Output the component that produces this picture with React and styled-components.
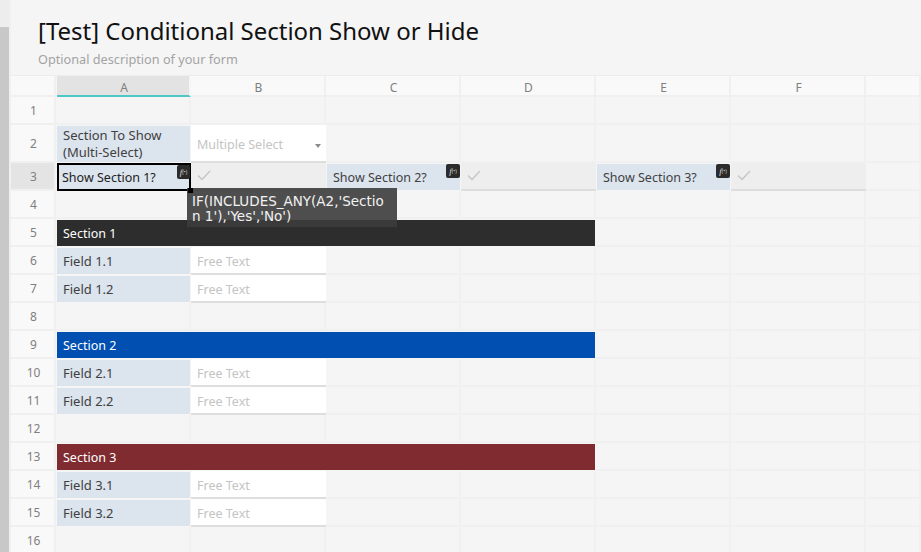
import React from 'react';
import styled, { createGlobalStyle } from 'styled-components';

const GlobalStyle = createGlobalStyle`
  html, body {
    margin: 0;
    height: 100%;
    overflow: hidden;
    background: #f5f5f5;
    font-family: "Noto Sans", "Open Sans", sans-serif;
  }
`;

const Page = styled.div`
  display: flex;
  width: 921px;
  height: 552px;
  overflow: hidden;
`;

const SideStrip = styled.div`
  width: 9px;
  flex: none;
  display: flex;
  flex-direction: column;
  background: #c8c8c8;
  border-right: 2px solid #f0f0f0;

  &::before {
    content: '';
    height: 27px;
    background: #ededed;
  }
`;

const Main = styled.div`
  flex: 1;
  min-width: 0;
`;

const FormHeader = styled.div`
  height: 76px;
  box-sizing: border-box;
  padding: 14px 0 0 27px;
  border-bottom: 1px solid #ececec;
`;

const Title = styled.h1`
  margin: 0;
  font-size: 24px;
  line-height: 33px;
  font-weight: 400;
  letter-spacing: -0.02px;
  color: #111;
`;

const Description = styled.p`
  margin: 4px 0 0;
  font-size: 12.7px;
  line-height: 17px;
  color: #a3a3a3;
`;

const Sheet = styled.div`
  display: grid;
  grid-template-columns: 45px repeat(6, 135px) 55px;
  grid-template-rows: 21px 28px 38px repeat(14, 28px);
`;

const ColHead = styled.div`
  box-sizing: border-box;
  display: flex;
  align-items: center;
  justify-content: center;
  padding: 4px 0 0 2px;
  font-size: 12px;
  color: #808080;
  background: ${(p) => (p.$active ? '#e3e3e3' : '#f9f9f9')};
  margin-left: ${(p) => (p.$active ? '1px' : '0')};
  border-right: 2px solid ${(p) => (p.$active ? '#f5f5f5' : '#f0f0f0')};
  border-bottom: 2px solid ${(p) => (p.$active ? '#4ec7c7' : '#f0f0f0')};
`;

const RowHead = styled.div`
  box-sizing: border-box;
  display: flex;
  align-items: center;
  justify-content: center;
  padding-left: 2px;
  font-size: 12px;
  color: #808080;
  background: ${(p) => (p.$active ? '#e4e4e4' : '#f9f9f9')};
  border-bottom: 2px solid #f0f0f0;
  border-right: 2px solid #f0f0f0;
`;

const Cell = styled.div`
  box-sizing: border-box;
  background: #f5f5f5;
  border-right: 2px solid #f0f0f0;
  border-bottom: 2px solid #f0f0f0;
`;

const Label = styled.div`
  position: relative;
  box-sizing: border-box;
  display: flex;
  align-items: center;
  margin: 1px;
  padding: 0 6px;
  font-size: 13px;
  line-height: 17px;
  color: #404040;
  background: #dce4ee;
`;

const FormulaLabel = styled(Label)`
  font-size: 12.5px;
`;

const FormulaBadge = styled.span`
  position: absolute;
  top: 0;
  right: 0;
  width: 14px;
  height: 14px;
  display: flex;
  align-items: center;
  justify-content: center;
  border-radius: 2px;
  font-size: 5px;
  line-height: 1;
  color: #ddd;
  background: #2b2b2b;

  b {
    font-size: 9px;
    font-weight: 400;
    font-family: "Liberation Serif", serif;
    font-style: italic;
  }
`;

const Selected = styled(FormulaLabel)`
  margin: 0 0 0 1px;
  padding: 0 3px;
  color: #222;
  border: 2px solid #000;
  z-index: 2;

  ${FormulaBadge} {
    right: -1px;
    width: 13px;
  }
`;

const Input = styled.div`
  box-sizing: border-box;
  display: flex;
  align-items: center;
  justify-content: space-between;
  padding: 2px 5px 0 6px;
  font-size: 12.5px;
  color: #c4c4c4;
  background: #fff;
  border-bottom: 2px solid #dedede;
`;

const Caret = styled.span`
  width: 0;
  height: 0;
  margin-top: 3px;
  border-left: 3.5px solid transparent;
  border-right: 3.5px solid transparent;
  border-top: 4px solid #8c8c8c;
`;

const CheckCell = styled.div`
  box-sizing: border-box;
  padding: 7px 0 0 6px;
  background: #eeeeee;
  border-bottom: 2px solid #dddddd;

  svg {
    display: block;
  }
`;

const Banner = styled.div`
  grid-column: span 4;
  display: flex;
  align-items: center;
  box-sizing: border-box;
  margin: 1px;
  padding: 0 6px;
  font-size: 12.5px;
  font-weight: 400;
  color: #fff;
  background: ${(p) => p.$color};
`;

const Handle = styled.span`
  position: absolute;
  right: -4px;
  bottom: -4px;
  width: 5px;
  height: 5px;
  background: #000;
  z-index: 4;
`;

const Tooltip = styled.div`
  position: absolute;
  top: 23px;
  left: 128px;
  width: 210px;
  height: 39px;
  box-sizing: border-box;
  padding: 6px 5px 0;
  font-family: "DejaVu Sans", sans-serif;
  font-size: 13.5px;
  line-height: 14.5px;
  word-break: break-all;
  color: #f2f2f2;
  background: rgba(60, 60, 60, 0.9);
  z-index: 3;
`;

const Check = () => (
  <svg width="14" height="11" viewBox="0 0 14 11" fill="none">
    <path d="M1 5.5 L5 9.5 L13 1" stroke="#c6c6c6" strokeWidth="1.4" />
  </svg>
);

const Badge = () => (
  <FormulaBadge>
    <b>f</b>(•)
  </FormulaBadge>
);

const columns = ['A', 'B', 'C', 'D', 'E', 'F'];

const sections = [
  { start: 5, name: 'Section 1', color: '#2d2d2d', fields: ['Field 1.1', 'Field 1.2'] },
  { start: 9, name: 'Section 2', color: '#004fb1', fields: ['Field 2.1', 'Field 2.2'] },
  { start: 13, name: 'Section 3', color: '#7f2b2f', fields: ['Field 3.1', 'Field 3.2'] },
];

const Blank = ({ count }) =>
  Array.from({ length: count }, (_, i) => <Cell key={i} />);

const renderRow = (row) => {
  if (row === 2) {
    return (
      <>
        <Label>Section To Show (Multi-Select)</Label>
        <Input>
          Multiple Select
          <Caret />
        </Input>
        <Blank count={5} />
      </>
    );
  }

  if (row === 3) {
    return (
      <>
        <Selected>
          Show Section 1?
          <Badge />
          <Handle />
          <Tooltip>IF(INCLUDES_ANY(A2,'Section 1'),'Yes','No')</Tooltip>
        </Selected>
        <CheckCell><Check /></CheckCell>
        <FormulaLabel>
          Show Section 2?
          <Badge />
        </FormulaLabel>
        <CheckCell><Check /></CheckCell>
        <FormulaLabel>
          Show Section 3?
          <Badge />
        </FormulaLabel>
        <CheckCell><Check /></CheckCell>
        <Cell />
      </>
    );
  }

  const section = sections.find((s) => s.start === row);
  if (section) {
    return (
      <>
        <Banner $color={section.color}>{section.name}</Banner>
        <Blank count={3} />
      </>
    );
  }

  const owner = sections.find((s) => row > s.start && row <= s.start + s.fields.length);
  if (owner) {
    return (
      <>
        <Label>{owner.fields[row - owner.start - 1]}</Label>
        <Input>Free Text</Input>
        <Blank count={5} />
      </>
    );
  }

  return <Blank count={7} />;
};

const App = () => {
  const rows = Array.from({ length: 16 }, (_, i) => i + 1);

  return (
    <>
      <GlobalStyle />
      <Page>
        <SideStrip />
        <Main>
          <FormHeader>
            <Title>[Test] Conditional Section Show or Hide</Title>
            <Description>Optional description of your form</Description>
          </FormHeader>
          <Sheet>
            <ColHead />
            {columns.map((c) => (
              <ColHead key={c} $active={c === 'A'}>{c}</ColHead>
            ))}
            <ColHead />
            {rows.map((row) => (
              <React.Fragment key={row}>
                <RowHead $active={row === 3}>{row}</RowHead>
                {renderRow(row)}
              </React.Fragment>
            ))}
          </Sheet>
        </Main>
      </Page>
    </>
  );
};

export default App;
